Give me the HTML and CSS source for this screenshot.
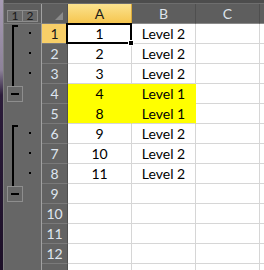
FILE: index.html
```html
<!DOCTYPE html>
<html lang="en">
<head>
  <meta charset="UTF-8">
  <title>Grouped rows</title>
  <link rel="stylesheet" href="styles.css">
</head>
<body>
  <div class="sheet">
    <div class="topbar"></div>

    <!-- Header row -->
    <div class="levels"><span class="lvl">1</span><span class="lvl">2</span></div>
    <div class="corner"><span class="tri"></span></div>
    <div class="colhead sel">A</div>
    <div class="colhead">B</div>
    <div class="colhead">C</div>
    <div class="colhead"></div>

    <!-- Outline symbols -->
    <div class="outline">
      <svg width="37" height="260" viewBox="0 0 37 260">
        <g fill="#000">
          <rect x="8" y="1" width="6" height="2"/>
          <rect x="8" y="1" width="2" height="61"/>
          <rect x="25" y="8" width="2" height="2"/>
          <rect x="25" y="28" width="2" height="2"/>
          <rect x="25" y="48" width="2" height="2"/>
          <rect x="8" y="101" width="6" height="2"/>
          <rect x="8" y="101" width="2" height="61"/>
          <rect x="25" y="108" width="2" height="2"/>
          <rect x="25" y="128" width="2" height="2"/>
          <rect x="25" y="148" width="2" height="2"/>
        </g>
        <rect x="3.5" y="62.5" width="15" height="15" fill="none" stroke="#8e8e8e"/>
        <rect x="7" y="69" width="8" height="2" fill="#000"/>
        <rect x="3.5" y="162.5" width="15" height="15" fill="none" stroke="#8e8e8e"/>
        <rect x="7" y="169" width="8" height="2" fill="#000"/>
      </svg>
    </div>

    <!-- Rows -->
    <div class="rowhead sel">1</div><div class="cell">1</div><div class="cell">Level 2</div><div class="cell"></div><div class="cell"></div>
    <div class="rowhead">2</div><div class="cell">2</div><div class="cell">Level 2</div><div class="cell"></div><div class="cell"></div>
    <div class="rowhead">3</div><div class="cell">3</div><div class="cell">Level 2</div><div class="cell"></div><div class="cell"></div>
    <div class="rowhead">4</div><div class="cell fill">4</div><div class="cell fill">Level 1</div><div class="cell"></div><div class="cell"></div>
    <div class="rowhead">5</div><div class="cell fill last">8</div><div class="cell fill last">Level 1</div><div class="cell"></div><div class="cell"></div>
    <div class="rowhead">6</div><div class="cell">9</div><div class="cell">Level 2</div><div class="cell"></div><div class="cell"></div>
    <div class="rowhead">7</div><div class="cell">10</div><div class="cell">Level 2</div><div class="cell"></div><div class="cell"></div>
    <div class="rowhead">8</div><div class="cell">11</div><div class="cell">Level 2</div><div class="cell"></div><div class="cell"></div>
    <div class="rowhead">9</div><div class="cell"></div><div class="cell"></div><div class="cell"></div><div class="cell"></div>
    <div class="rowhead">10</div><div class="cell"></div><div class="cell"></div><div class="cell"></div><div class="cell"></div>
    <div class="rowhead">11</div><div class="cell"></div><div class="cell"></div><div class="cell"></div><div class="cell"></div>
    <div class="rowhead">12</div><div class="cell"></div><div class="cell"></div><div class="cell"></div><div class="cell"></div>
    <div class="rowhead"></div><div class="cell"></div><div class="cell"></div><div class="cell"></div><div class="cell"></div>

    <!-- Active cell frame -->
    <div class="active"></div>
  </div>
</body>
</html>
```

FILE: styles.css
```css
html, body {
  margin: 0;
  padding: 0;
  overflow: hidden;
}
body {
  width: 264px;
  height: 270px;
  /* desktop showing through at the left edge */
  background: linear-gradient(#a69bb3 0, #8d8299 70px, #2b1c3a 95px, #1d1028 100%);
  font-family: Lato, "Liberation Sans", sans-serif;
  font-size: 14px;
}
.sheet {
  position: relative;
  margin-left: 3px;
  border-left: 1px solid #7e7e7e;
  display: grid;
  grid-template-columns: 38px 26px 64px 64px 64px 64px;
  grid-template-rows: 4px 20px repeat(13, 20px);
  background-color: #ffffff;
}
.sheet > div {
  box-sizing: border-box;
}
.topbar {
  grid-column: 1 / -1;
  background-color: #4d4d4d;
  border-bottom: 1px solid #6e6e6e;
}
/* Outline level buttons */
.levels {
  background-color: #5e5e5e;
  border-right: 1px solid #a2a2a2;
  border-bottom: 1px solid #7c7c7c;
  display: flex;
  padding: 6px 0 0 3px;
}
.lvl {
  width: 16px;
  height: 12px;
  box-sizing: border-box;
  border: 1px solid #8c8c8c;
  background-color: #686868;
  color: #1a1a1a;
  font-size: 12px;
  line-height: 10px;
  text-align: center;
}
.lvl + .lvl {
  border-left: none;
  width: 15px;
}
.corner {
  background-color: #5e5e5e;
  border-right: 1px solid #4f4f4f;
  border-bottom: 1px solid #7c7c7c;
  display: flex;
  justify-content: flex-end;
  align-items: flex-end;
  padding: 0 4px 3px 0;
}
.tri {
  width: 0;
  height: 0;
  border-left: 8px solid transparent;
  border-bottom: 8px solid #8a8a8a;
}
.colhead {
  background-color: #5e5e5e;
  color: #dfe4ec;
  border-right: 1px solid #4f4f4f;
  border-bottom: 1px solid #8a8a8a;
  text-align: center;
  line-height: 19px;
}
.colhead.sel {
  background: linear-gradient(#fbe28f, #f6c64f);
  color: #1a1a1a;
  border-right-color: #d9a93a;
  border-bottom-color: #e3b140;
}
.outline {
  grid-column: 1;
  grid-row: 3 / span 13;
  background-color: #666666;
  border-right: 1px solid #a2a2a2;
}
.outline svg {
  display: block;
}
.rowhead {
  background-color: #636363;
  color: #dfe6ef;
  border-right: 1px solid #4f4f4f;
  border-bottom: 1px solid #7a7a7a;
  text-align: center;
  line-height: 19px;
}
.rowhead.sel {
  background-color: #f8cf68;
  color: #1a1a1a;
}
.cell {
  color: #000000;
  border-right: 1px solid #d6d6d6;
  border-bottom: 1px solid #d6d6d6;
  text-align: center;
  line-height: 19px;
  white-space: nowrap;
}
.cell.fill {
  background-color: #ffff00;
  border-right-color: #ffff00;
  border-bottom-color: #ffff00;
}
.cell.fill.last {
  border-bottom-color: #d6d6d6;
}
/* Selected cell A1 */
.active {
  position: absolute;
  left: 62px;
  top: 23px;
  width: 66px;
  height: 21px;
  border: 2px solid #000000;
}
.active::after {
  content: "";
  position: absolute;
  right: -4px;
  bottom: -4px;
  width: 4px;
  height: 4px;
  background-color: #000000;
  border: 1px solid #ffffff;
}
```
